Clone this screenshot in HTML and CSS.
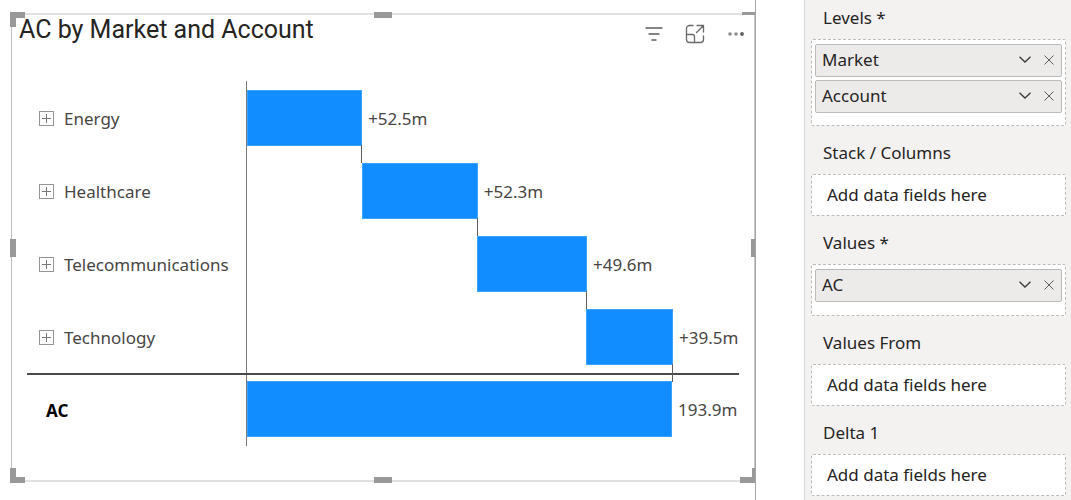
FILE: index.html
```html
<!DOCTYPE html>
<html lang="en">
<head>
<meta charset="utf-8">
<meta name="viewport" content="width=device-width, initial-scale=1">
<title>AC by Market and Account</title>
<link rel="stylesheet" href="styles.css">
</head>
<body>
<div class="workspace">
  <main class="canvas">
    <section class="visual" aria-labelledby="visual-title">
      <header class="visual-header">
        <h1 class="visual-title" id="visual-title">AC by Market and Account</h1>
        <div class="visual-actions">
          <button class="icon-button" type="button" aria-label="Filters">
            <svg width="18" height="14" viewBox="0 0 18 14" fill="none" stroke="#605e5c" stroke-width="1.4" stroke-linecap="round"><path d="M1 1h16M4 7h10M7 13h4"/></svg>
          </button>
          <button class="icon-button" type="button" aria-label="Focus mode">
            <svg width="20" height="20" viewBox="0 0 20 20" fill="none" stroke="#6b6967" stroke-width="1.3" stroke-linecap="round" stroke-linejoin="round"><path d="M8 1.500H4.500a3 3 0 0 0-3 3v11a3 3 0 0 0 3 3h11a3 3 0 0 0 3-3V12"/><path d="M1.500 10.500h6a2 2 0 0 1 2 2v6"/><path d="M12 1.500h6.500v6.500M18.300 1.700 11.500 8.500"/></svg>
          </button>
          <button class="icon-button" type="button" aria-label="More options">
            <svg width="18" height="4" viewBox="0 0 18 4"><circle cx="3" cy="2" r="1.800" fill="#8f8d8b"/><circle cx="9" cy="2" r="1.800" fill="#8f8d8b"/><circle cx="15" cy="2" r="1.900" fill="#605e5c"/></svg>
          </button>
        </div>
      </header>
      <div class="chart">
        <div class="row">
          <div class="category"><button class="expand" type="button" aria-label="Expand Energy"></button><span>Energy</span></div>
          <div class="plot"><div class="bar step" style="width:23.400%"></div><span class="value">+52.5m</span></div>
        </div>
        <div class="row">
          <div class="category"><button class="expand" type="button" aria-label="Expand Healthcare"></button><span>Healthcare</span></div>
          <div class="plot"><div class="bar step" style="margin-left:23.400%;width:23.500%"></div><span class="value">+52.3m</span></div>
        </div>
        <div class="row">
          <div class="category"><button class="expand" type="button" aria-label="Expand Telecommunications"></button><span>Telecommunications</span></div>
          <div class="plot"><div class="bar step" style="margin-left:46.800%;width:22.300%"></div><span class="value">+49.6m</span></div>
        </div>
        <div class="row">
          <div class="category"><button class="expand" type="button" aria-label="Expand Technology"></button><span>Technology</span></div>
          <div class="plot"><div class="bar step" style="margin-left:68.900%;width:17.700%"></div><span class="value">+39.5m</span></div>
        </div>
        <div class="row total">
          <div class="category">AC</div>
          <div class="plot"><div class="bar" style="width:86.400%"></div><span class="value">193.9m</span></div>
        </div>
      </div>
      <i class="handle corner top-left"></i>
      <i class="handle top"></i>
      <i class="handle top-right"></i>
      <i class="handle left"></i>
      <i class="handle right"></i>
      <i class="handle corner bottom-left"></i>
      <i class="handle bottom"></i>
      <i class="handle corner bottom-right"></i>
    </section>
  </main>
  <aside class="fields" aria-label="Data fields">
    <section>
      <h2 class="field-label">Levels *</h2>
      <div class="well filled">
        <div class="chip"><span class="chip-name">Market</span>
          <button class="chip-button" type="button" aria-label="Market options"><svg width="12" height="7" viewBox="0 0 12 7"><path d="M.5.800 6 6 11.500.800"/></svg></button>
          <button class="chip-button" type="button" aria-label="Remove Market"><svg width="10" height="10" viewBox="0 0 10 10"><path class="thin" d="m.5.500 9 9M9.500.500l-9 9"/></svg></button>
        </div>
        <div class="chip"><span class="chip-name">Account</span>
          <button class="chip-button" type="button" aria-label="Account options"><svg width="12" height="7" viewBox="0 0 12 7"><path d="M.5.800 6 6 11.500.800"/></svg></button>
          <button class="chip-button" type="button" aria-label="Remove Account"><svg width="10" height="10" viewBox="0 0 10 10"><path class="thin" d="m.5.500 9 9M9.500.500l-9 9"/></svg></button>
        </div>
      </div>
    </section>
    <section>
      <h2 class="field-label">Stack / Columns</h2>
      <div class="well empty">Add data fields here</div>
    </section>
    <section>
      <h2 class="field-label">Values *</h2>
      <div class="well filled">
        <div class="chip"><span class="chip-name">AC</span>
          <button class="chip-button" type="button" aria-label="AC options"><svg width="12" height="7" viewBox="0 0 12 7"><path d="M.5.800 6 6 11.500.800"/></svg></button>
          <button class="chip-button" type="button" aria-label="Remove AC"><svg width="10" height="10" viewBox="0 0 10 10"><path class="thin" d="m.5.500 9 9M9.500.500l-9 9"/></svg></button>
        </div>
      </div>
    </section>
    <section>
      <h2 class="field-label">Values From</h2>
      <div class="well empty">Add data fields here</div>
    </section>
    <section>
      <h2 class="field-label">Delta 1</h2>
      <div class="well empty">Add data fields here</div>
    </section>
  </aside>
</div>
</body>
</html>
```

FILE: styles.css
```css
* {
  box-sizing: border-box;
}

body {
  margin: 0;
  background: #fff;
  color: #252423;
  font-family: "Noto Sans", "Open Sans", sans-serif;
  font-size: 17px;
}

button {
  padding: 0;
  border: 0;
  background: none;
  cursor: pointer;
}

svg {
  display: block;
}

.workspace {
  display: flex;
  gap: 48px;
  min-height: 100vh;
}

.canvas {
  display: flex;
  flex: 1;
  min-width: 0;
  padding: 13px 0 18px 11px;
  border-right: 1px solid #a6a6a6;
}

.visual {
  position: relative;
  flex: 1;
  min-width: 0;
  border: solid #e1e1e1;
  border-width: 2px 1px;
  border-left-color: #c0c0c0;
  border-right-color: #c8c8c8;
}

.visual-header {
  display: flex;
  justify-content: space-between;
  align-items: flex-start;
  height: 66px;
  padding: 0 9px 0 7px;
}

.visual-title {
  margin: 0;
  font: 400 25px/30px Roboto, sans-serif;
}

.visual-actions {
  display: flex;
  align-items: center;
  gap: 22px;
  padding-top: 9px;
}

/* Waterfall chart */

.chart {
  padding: 0 15px;
  color: #484644;
}

.row {
  display: flex;
}

.category {
  display: flex;
  align-items: center;
  gap: 10px;
  flex: 0 0 219px;
  padding: 2px 0 0 12px;
}

.expand {
  width: 15px;
  height: 15px;
  border: 1px solid #979593;
  background:
    linear-gradient(#797775, #797775) center / 9px 1px no-repeat,
    linear-gradient(#797775, #797775) center / 1px 9px no-repeat;
}

.plot {
  display: flex;
  align-items: center;
  flex: 1;
  min-width: 0;
  padding: 9px 0 8px;
  border-left: 1px solid #7a7a7a;
}

.bar {
  position: relative;
  flex: none;
  height: 56px;
  border: 1px solid #3ba3ff;
  background: #118dff;
}

.step::after {
  content: "";
  position: absolute;
  z-index: 1;
  top: 100%;
  right: -1px;
  width: 1px;
  height: 18px;
  background: #605e5c;
}

.value {
  width: 0;
  padding-left: 6px;
  white-space: nowrap;
}

.total {
  border-top: 2px solid #4a4a4a;
}

.total .category {
  padding: 0 0 0 19px;
  color: #000;
  font-weight: 700;
}

.total .plot {
  padding: 6px 0 9px;
}

/* Resize handles */

.handle {
  position: absolute;
  border: 0 solid #999;
}

.corner {
  width: 15px;
  height: 15px;
}

.top-left {
  top: -3px;
  left: -2px;
  border-width: 6px 0 0 6px;
}

.bottom-left {
  bottom: -3px;
  left: -2px;
  border-width: 0 0 6px 6px;
}

.bottom-right {
  right: -1px;
  bottom: -3px;
  border-width: 0 3px 6px 0;
}

.top-right {
  top: -3px;
  right: -1px;
  width: 13px;
  border-top-width: 3px;
}

.top,
.bottom {
  left: calc(50% - 9px);
  width: 18px;
  border-top-width: 6px;
}

.top {
  top: -3px;
}

.bottom {
  bottom: -3px;
}

.left,
.right {
  top: calc(50% - 9px);
  height: 18px;
}

.left {
  left: -2px;
  border-left-width: 6px;
}

.right {
  right: -1px;
  border-left-width: 4px;
}

/* Field panel */

.fields {
  flex: 0 0 267px;
  padding: 0 5px 4px 6px;
  border-left: 1px solid #d9d9d9;
  background: #f3f2f1;
}

.field-label {
  margin: 0;
  padding: 6px 0 0 12px;
  font-size: 17px;
  font-weight: 400;
  line-height: 42px;
}

.fields section:first-child .field-label {
  padding: 0 0 3px 12px;
  line-height: 36px;
}

.well {
  border: 1px dashed #bdbbb9;
  border-radius: 2px;
  background: #fff;
}

.filled {
  display: grid;
  align-content: start;
  gap: 3px;
  min-height: 52px;
  padding: 4px 3px 12px;
}

.empty {
  padding-left: 15px;
  line-height: 40px;
}

.chip {
  display: flex;
  align-items: center;
  height: 33px;
  padding: 0 7px 2px 6px;
  border: 1px solid #bdbbb9;
  border-radius: 2px;
  background: #edebe9;
}

.chip-name {
  flex: 1;
}

.chip-button {
  margin-left: 13px;
}

.chip-button path {
  fill: none;
  stroke: #3b3a39;
  stroke-width: 1.3;
}

.chip-button .thin {
  stroke: #605e5c;
  stroke-width: 1;
}
```
